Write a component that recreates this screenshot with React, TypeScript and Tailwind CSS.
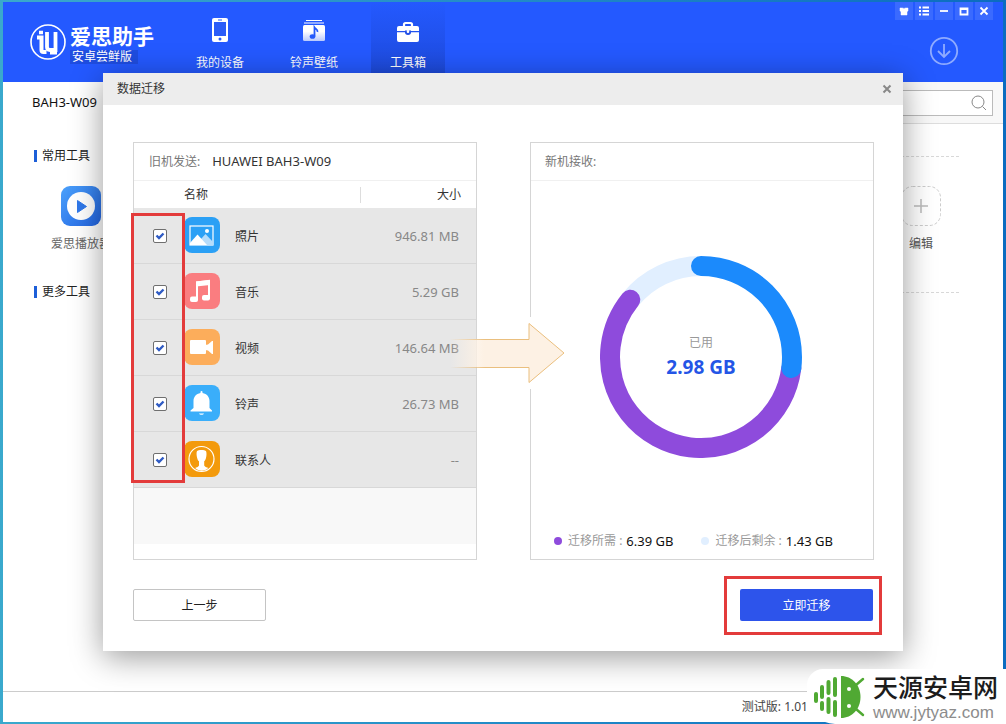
import { useState } from "react";
import type { ReactNode } from "react";

type Item = {
  id: string;
  name: string;
  size: string;
  color: string;
  icon: ReactNode;
};

const items: Item[] = [
  {
    id: "photo",
    name: "照片",
    size: "946.81 MB",
    color: "bg-[#2ba0f5]",
    icon: (
      <>
        <rect x="6" y="9" width="23" height="19" fill="none" stroke="#fff" strokeWidth="1.2" />
        <path d="M17 22l4.500-5L29 25v3H18z" fill="#b5dcfb" />
        <path d="M6 26l7.500-8.500L23 28H6z" fill="#fff" />
        <circle cx="23" cy="14" r="2" fill="#fff" />
      </>
    ),
  },
  {
    id: "music",
    name: "音乐",
    size: "5.29 GB",
    color: "bg-[#fa7d80]",
    icon: (
      <>
        <path d="M13 26V9.500L25 8v17" fill="none" stroke="#fff" strokeWidth="2" />
        <path d="M12 8.500l14-1.500v5l-14 1.500z" fill="#fff" />
        <rect x="6" y="23.500" width="8" height="5.500" rx="2" fill="#fff" />
        <rect x="18" y="22" width="8" height="5.500" rx="2" fill="#fff" />
      </>
    ),
  },
  {
    id: "video",
    name: "视频",
    size: "146.64 MB",
    color: "bg-[#fcad5b]",
    icon: (
      <>
        <rect x="6" y="11" width="16" height="14" rx="1" fill="#fff" />
        <path d="M21 16l3-.500 4-3.500h1v13h-1l-4-3.500-3-.500z" fill="#fff" />
      </>
    ),
  },
  {
    id: "ring",
    name: "铃声",
    size: "26.73 MB",
    color: "bg-[#3aaefa]",
    icon: (
      <>
        <path
          d="M16.500 7a1 1 0 0 1 2 0v1c4.500.7 7 4 7 8v7l2.500 2.500v1H6.500v-1L9.500 23v-7c0-4 2.500-7.300 7-8z"
          fill="#fff"
        />
        <path d="M15 28.500h5c-.5 1.800-4.500 1.800-5 0z" fill="#fff" />
      </>
    ),
  },
  {
    id: "contact",
    name: "联系人",
    size: "--",
    color: "bg-[#f39a0c]",
    icon: (
      <>
        <circle cx="17.500" cy="18" r="12.500" fill="none" stroke="#fff" strokeWidth="1.200" />
        <path
          d="M13 10c1-1.500 8-1.500 9 0 .8 1.500.6 5 0 7-.4 1.500-1 2.500-1.800 3.300v4.200c.8 1.500 3 2 4 2.500-3.500 3.600-9.500 3.600-13 0 1-.5 3-1 3.800-2.500v-4.200c-1-.8-1.500-1.800-1.800-3.300-.6-2-1-5.500-.2-7z"
          fill="#fff"
        />
      </>
    ),
  },
];

const segments = [
  { from: 309, to: 360, color: "#e1efff", cap: "butt" as const },
  { from: 97, to: 309, color: "#8e4bdc", cap: "round" as const },
  { from: 0, to: 97, color: "#1b8afc", cap: "round" as const },
];

const tabs = [
  {
    label: "我的设备",
    icon: (
      <>
        <rect x="6" y="2" width="16" height="24" rx="2" fill="#fff" />
        <rect x="8" y="6" width="12" height="14" fill="#2a5cf8" />
        <rect x="12" y="3.500" width="4" height="1" fill="#2a5cf8" />
        <circle cx="14" cy="23" r="1.500" fill="#2a5cf8" />
      </>
    ),
  },
  {
    label: "铃声壁纸",
    icon: (
      <>
        <defs>
          <linearGradient id="album" x1="0" y1="0" x2="0" y2="1">
            <stop offset="0.400" stopColor="#fff" />
            <stop offset="1" stopColor="#b9c9fc" />
          </linearGradient>
        </defs>
        <path d="M6 4.500h16M4 7h20" stroke="#fff" strokeWidth="1.200" />
        <rect x="3" y="9" width="22" height="16" rx="1.500" fill="url(#album)" />
        <path d="M14.500 20.500V11.500c1 1.500 3.500 1.500 3 4.500" fill="none" stroke="#2459fb" strokeWidth="1.800" />
        <ellipse cx="12.500" cy="20.500" rx="2.800" ry="2.300" fill="#2459fb" />
      </>
    ),
  },
  {
    label: "工具箱",
    active: true,
    icon: (
      <>
        <path d="M10 10V8.500A1.500 1.500 0 0 1 11.500 7h5A1.500 1.500 0 0 1 18 8.500V10" fill="none" stroke="#fff" strokeWidth="2.200" />
        <path d="M5 10h18a2 2 0 0 1 2 2v3H3v-3a2 2 0 0 1 2-2z" fill="#fff" />
        <path d="M3 16.200h8a3.100 3.100 0 0 0 6 0h8V24a2 2 0 0 1-2 2H5a2 2 0 0 1-2-2z" fill="#fff" />
        <path d="M11 14.500h6v1.500a3 3 0 0 1-6 0z" fill="#2451e6" />
        <rect x="12.800" y="14" width="2.400" height="3" rx="1" fill="#fff" />
      </>
    ),
  },
];

const windowButtons = [
  { label: "皮肤", d: "M1 2h2.500q1.500 1 3 0H9v3l-1 .5V9H2V5.500L1 5z", fill: true },
  { label: "菜单", d: "M0 1.500h2M3.500 1.500H10M0 5h2M3.500 5H10M0 8.500h2M3.500 8.500H10" },
  { label: "最小化", d: "M1 5h8" },
  { label: "最大化", d: "M1.500 2.500h7v6h-7zM1 3h8" },
  { label: "关闭", d: "M1.500 1.500l7 7M8.500 1.500l-7 7" },
];

function Logo() {
  return (
    <div className="flex items-start gap-1 pl-[27px] pt-[22px]">
      <svg viewBox="0 0 36 36" className="w-9 h-9 shrink-0" fill="none" stroke="#fff">
        <circle cx="18" cy="18" r="17" strokeWidth="1.600" />
        <path d="M9 8.500h4" strokeWidth="3.500" />
        <path d="M7 13.500h4.500V26q0 2 2 2h3" strokeWidth="4" />
        <path d="M17 8v15q0 3 3 3h5.500V8" strokeWidth="3.800" />
        <path d="M25.500 22v7H20" strokeWidth="3" />
      </svg>
      <div className="flex flex-col items-start gap-0.5">
        <span className="text-[21px] leading-6 font-bold">爱思助手</span>
        <span className="px-0.5 pr-1.5 bg-[#1f4de0] text-xs leading-3.5">
          安卓尝鲜版
        </span>
      </div>
    </div>
  );
}

function Header() {
  return (
    <header className="flex items-stretch h-20 bg-[#2459ff] text-white">
      <Logo />
      <nav className="flex gap-5 ml-[29px]">
        {tabs.map((tab) => (
          <button
            key={tab.label}
            className={`flex flex-col items-center w-[74px] pt-3.5 gap-[9px] text-xs leading-5 ${
              tab.active ? "bg-gradient-to-b from-[#2459ff] to-[#1d49d8]" : ""
            }`}
          >
            <svg viewBox="0 0 28 28" className="w-7 h-7 shrink-0">
              {tab.icon}
            </svg>
            {tab.label}
          </button>
        ))}
      </nav>
      <div className="flex flex-col items-end ml-auto mr-2.5">
        <div className="flex gap-0.5">
          {windowButtons.map((b) => (
            <button
              key={b.label}
              aria-label={b.label}
              className="grid place-items-center w-[18px] h-[18px] bg-[#3a6aff]"
            >
              <svg
                viewBox="0 0 10 10"
                className="w-2.5 h-2.5"
                fill={b.fill ? "#fff" : "none"}
                stroke="#fff"
                strokeWidth={b.fill ? 0.5 : 1.8}
              >
                <path d={b.d} />
              </svg>
            </button>
          ))}
        </div>
        <button aria-label="下载" className="mt-4 mr-[34px]">
          <svg
            viewBox="0 0 30 30"
            className="w-[30px] h-[30px]"
            fill="none"
            stroke="#8fabff"
            strokeWidth="1.800"
          >
            <circle cx="15" cy="15" r="13.200" />
            <path d="M15 8v13M9 15l6 6 6-6" />
          </svg>
        </button>
      </div>
    </header>
  );
}

function SectionTitle({ children }: { children: ReactNode }) {
  return (
    <h2 className="flex items-center gap-[5px] text-xs leading-5 text-[#222]">
      <span className="w-[3px] h-3 bg-[#1d5fd8]" />
      {children}
      <span className="flex-1 ml-2 border-t border-dashed border-[#d8d8d8]" />
    </h2>
  );
}

function Tools() {
  return (
    <main className="flex-1 bg-white">
      <div className="flex items-stretch h-[42px]">
        <div className="flex items-center pl-[29px] w-40 text-[13px] text-[#111]">
          BAH3-W09
        </div>
        <div className="flex flex-1 items-center justify-end pr-2.5 bg-[#f8f8f8] border-b border-[#ddd]">
          <label className="flex items-center w-52 h-[26px] pr-1 bg-white border border-[#bbb]">
            <input
              type="search"
              aria-label="搜索"
              className="flex-1 min-w-0 h-full px-2 text-xs outline-none"
            />
            <svg viewBox="0 0 18 18" className="w-[18px] h-[18px]" fill="none" stroke="#888">
              <circle cx="8" cy="8" r="6" />
              <path d="M12.500 12.500l3.500 3.500" />
            </svg>
          </label>
        </div>
      </div>
      <div className="pl-[31px] pr-11 pt-[22px]">
        <SectionTitle>常用工具</SectionTitle>
        <div className="flex justify-between pl-[17px] pr-2 pt-5 pb-7">
          <a href="#player" className="flex flex-col items-center w-[60px] gap-2 text-xs leading-5 text-[#666]">
            <svg viewBox="0 0 40 40" className="w-10 h-10">
              <defs>
                <linearGradient id="player" x1="0" y1="0" x2="1" y2="1">
                  <stop offset="0" stopColor="#4ba1fb" />
                  <stop offset="1" stopColor="#2264e2" />
                </linearGradient>
              </defs>
              <rect width="40" height="40" rx="9" fill="url(#player)" />
              <circle cx="20" cy="20" r="14" fill="#fff" />
              <path d="M16.500 14.500v12l9-6z" fill="#2f78ea" stroke="#2f78ea" strokeLinejoin="round" />
            </svg>
            爱思播放器
          </a>
          <a href="#edit" className="flex flex-col items-center w-[60px] gap-2 text-xs leading-5 text-[#555]">
            <svg viewBox="0 0 40 40" className="w-10 h-10" fill="none">
              <rect x="0.500" y="0.500" width="39" height="39" rx="11" stroke="#ccc" strokeDasharray="3 2" />
              <path d="M13 20h14M20 13v14" stroke="#bbb" strokeWidth="1.500" />
            </svg>
            编辑
          </a>
        </div>
        <SectionTitle>更多工具</SectionTitle>
      </div>
    </main>
  );
}

function SourcePanel() {
  const [checked, setChecked] = useState(items.map((i) => i.id));

  const toggle = (id: string) =>
    setChecked((prev) =>
      prev.includes(id) ? prev.filter((x) => x !== id) : [...prev, id],
    );

  return (
    <section className="relative flex-1 border border-[#d5d5d5] pb-[15px]">
      <h3 className="flex items-center h-[38px] pl-[15px] gap-3 border-b border-[#f0f0f0] text-xs text-[#777]">
        旧机发送:
        <span className="text-[13px] text-[#333]">HUAWEI BAH3-W09</span>
      </h3>
      <table className="w-full text-xs text-[#333] border-collapse">
        <thead>
          <tr className="h-[27px]">
            <th className="w-[50px]" />
            <th className="p-0 text-left font-normal">名称</th>
            <th className="w-[116px] p-0 font-normal">
              <span className="block h-4 pr-[15px] border-l border-[#ddd] text-right leading-4">
                大小
              </span>
            </th>
          </tr>
        </thead>
        <tbody>
          {items.map((item) => (
            <tr key={item.id} className="h-14 bg-[#e7e7e7] shadow-[inset_0_-1px_0_#d8d8d8]">
              <td className="p-0">
                <span className="grid w-3.5 ml-[19px]">
                  <input
                    id={item.id}
                    type="checkbox"
                    checked={checked.includes(item.id)}
                    onChange={() => toggle(item.id)}
                    className="peer col-start-1 row-start-1 appearance-none w-3.5 h-3.5 bg-white border border-[#6f6f6f] rounded-[2px]"
                  />
                  <svg
                    viewBox="0 0 14 14"
                    className="col-start-1 row-start-1 w-3.5 h-3.5 pointer-events-none invisible peer-checked:visible"
                    fill="none"
                    stroke="#2f5bc4"
                    strokeWidth="2.400"
                  >
                    <path d="M3.500 6.500l2.500 2.500 4.500-4.500" />
                  </svg>
                </span>
              </td>
              <td className="p-0 pb-0.5">
                <label htmlFor={item.id} className="flex items-center gap-[15px]">
                  <span className={`w-9 h-9 rounded-lg ${item.color}`}>
                    <svg viewBox="0 0 36 36" className="w-9 h-9">
                      {item.icon}
                    </svg>
                  </span>
                  <span className="pt-1">{item.name}</span>
                </label>
              </td>
              <td className="p-0 pt-0.5 pr-[17px] text-right text-[13px] text-[#888]">
                {item.size}
              </td>
            </tr>
          ))}
        </tbody>
      </table>
      <div className="h-14 bg-[#f8f8f8]" />
      {/* Destaque da coluna de seleção */}
      <div className="absolute -left-[3px] top-[70px] w-[54px] h-[270px] border-3 border-[#e33b3b] pointer-events-none" />
    </section>
  );
}

function Arrow() {
  return (
    <div className="relative w-[53px] shrink-0 z-10">
      <svg viewBox="0 0 120 72" className="absolute -left-8 top-[175px] w-[120px] h-[72px] max-w-none">
        <defs>
          <linearGradient id="shaft">
            <stop offset="0" stopColor="#fdf1e4" stopOpacity="0" />
            <stop offset="0.300" stopColor="#fdf1e4" />
          </linearGradient>
          <linearGradient id="edge" gradientUnits="userSpaceOnUse" x1="5" y1="0" x2="40" y2="0">
            <stop offset="0" stopColor="#eabf7e" stopOpacity="0" />
            <stop offset="1" stopColor="#eabf7e" />
          </linearGradient>
        </defs>
        <path d="M83 0h4v72h-4z" fill="#fff" />
        <path d="M5 22h79V6l35 30-35 30V50H5z" fill="url(#shaft)" />
        <path d="M5 22.500h79V6.500l35 29.500-35 29.500V50.500H5" fill="none" stroke="url(#edge)" />
      </svg>
    </div>
  );
}

function Legend({ color, label, value }: { color: string; label: string; value: string }) {
  return (
    <div className="flex items-center text-xs leading-5 text-[#999]">
      <span className={`w-2 h-2 mr-1.5 rounded-full ${color}`} />
      {label}&nbsp;:
      <span className="ml-1 text-[13px] text-[#111]">{value}</span>
    </div>
  );
}

function TargetPanel() {
  return (
    <section className="flex flex-col flex-1 border border-[#d5d5d5]">
      <h3 className="flex items-center h-[38px] pl-3.5 border-b border-[#f0f0f0] text-xs text-[#777]">
        新机接收:
      </h3>
      <div className="grid place-items-center pt-[75px] pr-0.5">
        <svg viewBox="0 0 202 202" className="col-start-1 row-start-1 w-[202px] h-[202px]">
          {segments.map((s) => (
            <circle
              key={s.color}
              cx="101"
              cy="101"
              r="91"
              fill="none"
              stroke={s.color}
              strokeWidth="20"
              strokeLinecap={s.cap}
              pathLength={360}
              strokeDasharray={`${s.to - s.from} 360`}
              transform={`rotate(${s.from - 90} 101 101)`}
            />
          ))}
        </svg>
        <div className="col-start-1 row-start-1 text-center">
          <p className="text-xs leading-5 text-[#999]">已用</p>
          <p className="text-[19px] leading-7 font-bold text-[#2455e6]">2.98 GB</p>
        </div>
      </div>
      <div className="flex gap-7 pl-[23px] pb-2 mt-auto">
        <Legend color="bg-[#8e4bdc]" label="迁移所需" value="6.39 GB" />
        <Legend color="bg-[#e1efff]" label="迁移后剩余" value="1.43 GB" />
      </div>
    </section>
  );
}

function MigrateDialog() {
  return (
    <div
      role="dialog"
      aria-label="数据迁移"
      className="w-full max-w-[800px] bg-white shadow-[0_6px_30px_rgba(0,0,0,0.400)]"
    >
      <div className="flex items-center justify-between h-8 pl-3.5 pr-[11px] bg-[#ededed] text-xs text-[#333]">
        数据迁移
        <button aria-label="关闭">
          <svg viewBox="0 0 10 10" className="w-2.5 h-2.5" stroke="#888" strokeWidth="2">
            <path d="M1.500 1.500l7 7M8.500 1.500l-7 7" />
          </svg>
        </button>
      </div>
      <div className="pl-[30px] pr-[29px] pt-[37px] pb-[30px]">
        <div className="flex">
          <SourcePanel />
          <Arrow />
          <TargetPanel />
        </div>
        <div className="flex justify-between mt-[29px] pr-px">
          <button className="w-[133px] h-8 pt-0.5 border border-[#c4c4c4] rounded-[2px] text-xs text-[#222]">
            上一步
          </button>
          <div className="relative">
            <button className="w-[133px] h-8 pt-0.5 bg-[#2d54eb] rounded-[2px] text-xs text-white">
              立即迁移
            </button>
            <div className="absolute -left-4 -right-[9px] -top-[13px] -bottom-3.5 border-3 border-[#e33b3b] pointer-events-none" />
          </div>
        </div>
      </div>
    </div>
  );
}

function Watermark() {
  return (
    <div className="absolute right-0 bottom-0 flex items-center gap-2 h-[55px] pl-1.5 pr-2 bg-white rounded-tl-2xl rounded-bl-[28px]">
      <svg viewBox="0 0 52 44" className="w-[52px] h-11" fill="#50a933" stroke="#50a933" strokeLinecap="round">
        <g strokeWidth="4">
          <path d="M3 19v7M9 12v10M9 28v6M15.500 7v11M15.500 24v13M22 4v16M22 27v13" />
        </g>
        <path d="M28 1c11 0 19.500 9 19.500 21S39 43 28 43z" stroke="none" />
        <path d="M43 10l7-6M43 34l7 6" strokeWidth="2.500" />
        <circle cx="36" cy="14" r="2" fill="#fff" stroke="none" />
        <circle cx="36" cy="31" r="2" fill="#fff" stroke="none" />
      </svg>
      <div>
        <p className="text-[25px] leading-8 font-medium text-[#1c1c1c]">天源安卓网</p>
        <p className="font-['Liberation_Sans',sans-serif] text-[17px] leading-5 text-[#8c8c8c]">
          www.jytyaz.com
        </p>
      </div>
    </div>
  );
}

export default function App() {
  return (
    <div className="relative flex flex-col min-h-screen px-[3px] py-0.5 bg-gradient-to-r from-[#3aa9cd] to-[#0b6cc0] font-['Noto_Sans','Noto_Sans_CJK_SC',sans-serif]">
      <Header />
      <Tools />
      <footer className="flex items-center justify-end h-[31px] pr-[195px] bg-white border-t border-[#ccc] text-xs text-[#444]">
        测试版: 1.01
      </footer>

      <div className="absolute inset-x-0 top-[73px] flex justify-center">
        <MigrateDialog />
      </div>
      <Watermark />
    </div>
  );
}
